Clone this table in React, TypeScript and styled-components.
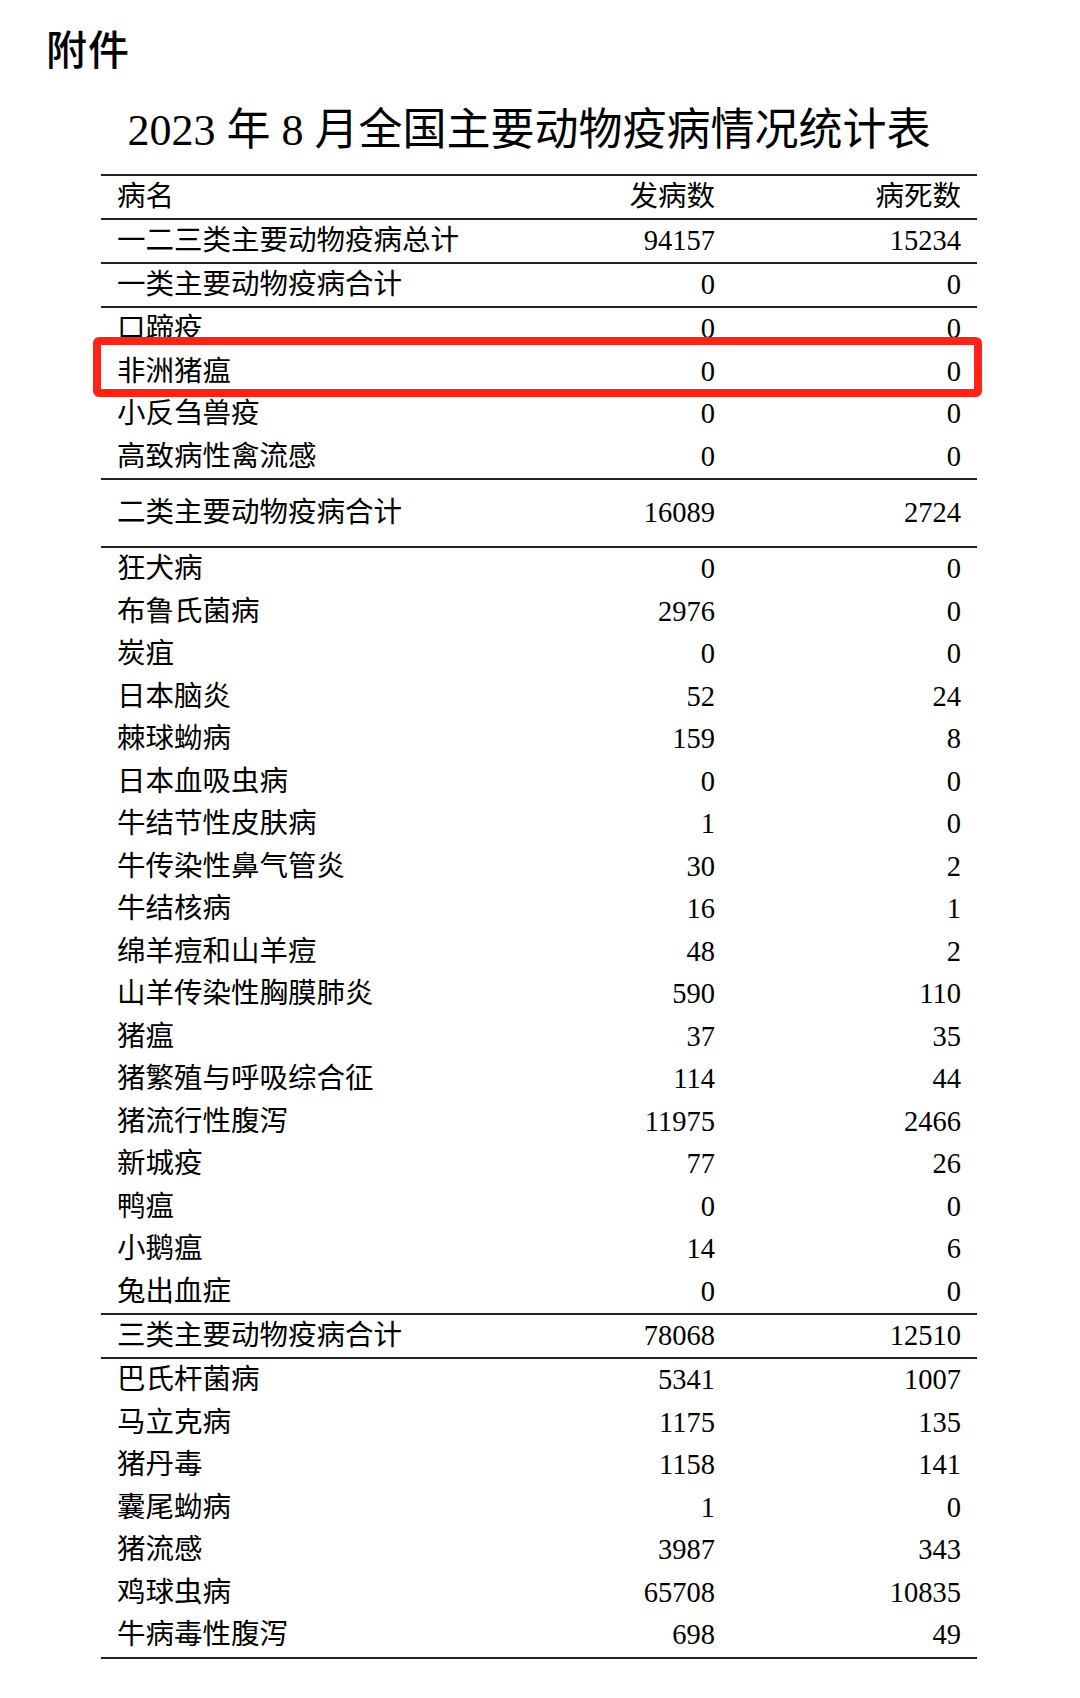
import styled, { createGlobalStyle, css } from "styled-components"

const GlobalStyle = createGlobalStyle`
  html, body {
    margin: 0;
    padding: 0;
    background: #ffffff;
  }
  body {
    font-family: "Liberation Serif", "Noto Sans CJK SC", serif;
    color: #000;
  }
`

type Row = [string, number, number]

const topRows: Row[] = [
  ["一二三类主要动物疫病总计", 94157, 15234],
  ["一类主要动物疫病合计", 0, 0],
]

const classOne: Row[] = [
  ["口蹄疫", 0, 0],
  ["非洲猪瘟", 0, 0],
  ["小反刍兽疫", 0, 0],
  ["高致病性禽流感", 0, 0],
]

const classTwo: Row[] = [
  ["狂犬病", 0, 0],
  ["布鲁氏菌病", 2976, 0],
  ["炭疽", 0, 0],
  ["日本脑炎", 52, 24],
  ["棘球蚴病", 159, 8],
  ["日本血吸虫病", 0, 0],
  ["牛结节性皮肤病", 1, 0],
  ["牛传染性鼻气管炎", 30, 2],
  ["牛结核病", 16, 1],
  ["绵羊痘和山羊痘", 48, 2],
  ["山羊传染性胸膜肺炎", 590, 110],
  ["猪瘟", 37, 35],
  ["猪繁殖与呼吸综合征", 114, 44],
  ["猪流行性腹泻", 11975, 2466],
  ["新城疫", 77, 26],
  ["鸭瘟", 0, 0],
  ["小鹅瘟", 14, 6],
  ["兔出血症", 0, 0],
]

const classThree: Row[] = [
  ["巴氏杆菌病", 5341, 1007],
  ["马立克病", 1175, 135],
  ["猪丹毒", 1158, 141],
  ["囊尾蚴病", 1, 0],
  ["猪流感", 3987, 343],
  ["鸡球虫病", 65708, 10835],
  ["牛病毒性腹泻", 698, 49],
]

const Page = styled.div`
  width: 1080px;
  min-height: 1698px;
  box-sizing: border-box;
  padding: 20px 0 0 0;
`

const Attachment = styled.div`
  font-family: "Noto Sans CJK SC", sans-serif;
  font-size: 41px;
  font-weight: 500;
  line-height: 54px;
  padding-left: 46px;
  letter-spacing: 1px;
`

const Sheet = styled.div`
  width: 876px;
  margin-left: 101px;
`

const Title = styled.h1`
  margin: 0;
  padding: 30px 20px 0 0;
  height: 70px;
  text-align: center;
  font-family: "Liberation Serif", "Noto Sans CJK SC", serif;
  font-size: 44px;
  font-weight: 400;
  line-height: 54px;
  white-space: nowrap;
`

const Block = styled.div<{ $last?: boolean }>`
  border-top: 2px solid #222;
  ${({ $last }) =>
    $last &&
    css`
      border-bottom: 2px solid #222;
    `}
`

const Line = styled.div<{ $h: number; $marked?: boolean }>`
  position: relative;
  display: grid;
  grid-template-columns: 1fr 246px 246px;
  align-items: center;
  box-sizing: border-box;
  height: ${({ $h }) => $h}px;
  padding: 0 16px;
  font-size: 28.5px;
  line-height: 1;
  ${({ $marked }) =>
    $marked &&
    css`
      &::after {
        content: "";
        position: absolute;
        top: -14px;
        bottom: -4px;
        left: -8px;
        right: -5px;
        border: 8px solid #ff2219;
        border-radius: 6px;
        pointer-events: none;
      }
    `}
`

const Name = styled.span`
  white-space: nowrap;
`

const Num = styled.span`
  text-align: right;
`

function DataRow({ row, h, marked }: { row: Row; h: number; marked?: boolean }) {
  return (
    <Line $h={h} $marked={marked}>
      <Name>{row[0]}</Name>
      <Num>{row[1]}</Num>
      <Num>{row[2]}</Num>
    </Line>
  )
}

export default function App() {
  return (
    <Page>
      <GlobalStyle />
      <Attachment>附件</Attachment>
      <Sheet>
        <Title>2023 年 8 月全国主要动物疫病情况统计表</Title>
        <Block>
          <Line $h={42}>
            <Name>病名</Name>
            <Num>发病数</Num>
            <Num>病死数</Num>
          </Line>
        </Block>
        {topRows.map((r) => (
          <Block key={r[0]}>
            <DataRow row={r} h={42} />
          </Block>
        ))}
        <Block>
          {classOne.map((r) => (
            <DataRow key={r[0]} row={r} h={42.5} marked={r[0] === "非洲猪瘟"} />
          ))}
        </Block>
        <Block>
          <DataRow row={["二类主要动物疫病合计", 16089, 2724]} h={66} />
        </Block>
        <Block>
          {classTwo.map((r) => (
            <DataRow key={r[0]} row={r} h={42.5} />
          ))}
        </Block>
        <Block>
          <DataRow row={["三类主要动物疫病合计", 78068, 12510]} h={42} />
        </Block>
        <Block $last>
          {classThree.map((r) => (
            <DataRow key={r[0]} row={r} h={42.5} />
          ))}
        </Block>
      </Sheet>
    </Page>
  )
}
